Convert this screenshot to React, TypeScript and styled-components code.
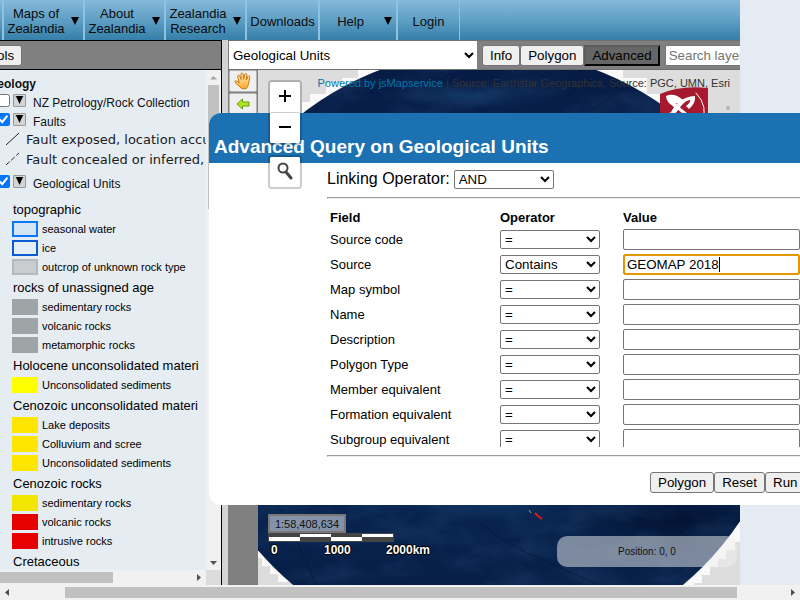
import React from "react";
import styled, { createGlobalStyle, css } from "styled-components";

const sans = '"Liberation Sans", Arial, sans-serif';

const GlobalStyle = createGlobalStyle`
  html, body { margin: 0; height: 100%; }
  body { background: #e4ebf3; font-family: ${sans}; color: #111; overflow: hidden; }
  *, *::before, *::after { box-sizing: border-box; }
  button, input, select { font-family: ${sans}; }
  svg { flex: none; }
`;

const Frame = styled.div`
  height: 100vh;
  display: flex;
  flex-direction: column;
`;

const Viewport = styled.div`
  position: relative;
  flex: 1;
  min-height: 0;
  overflow: hidden;
  display: flex;
`;

/* The document is scrolled 65px to the right. */
const Page = styled.div`
  flex: 1;
  min-width: 0;
  margin: 0 60px 0 -65px;
  display: flex;
  flex-direction: column;
`;

const Nav = styled.nav`
  flex: none;
  height: 40px;
  display: flex;
  overflow: hidden;
  background: linear-gradient(#85b9da, #5f9fc5 50%, #357fa9);
`;

const NavItem = styled.a<{ $width: number }>`
  flex: none;
  width: ${(p) => p.$width}px;
  display: flex;
  align-items: center;
  padding-top: 2px;
  border-right: 2px solid #8fc1e0;
  color: #0b0b0b;
  font-size: 13px;
  line-height: 15px;
  text-align: center;
  text-decoration: none;
  &:last-child { border-right-width: 1px; }
`;

const NavLabel = styled.span`
  flex: 1;
  padding: 0 3px;
`;

const NavArrow = styled.svg`
  flex: none;
  width: 8px;
  height: 8px;
  margin: 0 4px 0 3px;
`;

const Columns = styled.div`
  flex: 1;
  min-height: 0;
  display: flex;
`;

const SidePanel = styled.aside`
  flex: none;
  width: 287px;
  display: flex;
  flex-direction: column;
  border-right: 1px solid #000;
`;

const SideTools = styled.div`
  flex: none;
  height: 30px;
  display: flex;
  align-items: center;
  padding-left: 40px;
  border-top: 1px solid #000;
  border-bottom: 1px solid #000;
  background: #808080;
`;

const SideScroll = styled.div`
  flex: 1;
  min-height: 0;
  display: grid;
  grid-template-columns: minmax(0, 1fr) 15px;
  grid-template-rows: minmax(0, 1fr) 15px;
`;

const LayerTree = styled.div`
  overflow: hidden;
  padding: 5px 0 0 53px;
  background: #e5ecf2;
  white-space: nowrap;
`;

const Corner = styled.div`
  background: #dcdcdc;
`;

const GroupTitle = styled.h2`
  margin: 0;
  font-size: 12px;
  line-height: 18px;
`;

const LayerRow = styled.div`
  display: flex;
  align-items: center;
  height: 19px;
  padding-left: 9px;
  font-size: 12px;
`;

const LayerCheck = styled.input`
  width: 13px;
  height: 13px;
  margin: 0 3px 4px 0;
`;

const ExpandButton = styled.button`
  width: 13px;
  height: 13px;
  margin: 0 7px 4px 0;
  padding: 0;
  display: flex;
  align-items: center;
  justify-content: center;
  border: 1px solid #999;
  border-radius: 1px;
  background: #d4d4d4;
`;

const FaultList = styled.ul`
  list-style: none;
  margin: -2px 0 5px;
  padding: 0 0 0 18px;
`;

const FaultRow = styled.li`
  display: flex;
  align-items: center;
  gap: 6px;
  height: 20px;
  color: #1a1a1a;
  font: 13px "DejaVu Sans", sans-serif;
`;

const LegendGroup = styled.section`
  padding: 0 0 2px 25px;
`;

const Legend = styled.div`
  padding-top: 7px;
`;

const LegendTitle = styled.h3`
  margin: 0;
  color: #000;
  font-size: 13px;
  font-weight: 400;
  line-height: 19px;
`;

const LegendItem = styled.div`
  display: flex;
  align-items: center;
  gap: 4px;
  height: 19px;
  color: #000;
  font-size: 11px;
`;

const Swatch = styled.span<{ $fill: string; $line?: string }>`
  width: 26px;
  height: 16px;
  margin-left: -1px;
  background: ${(p) => p.$fill};
  border: 2px solid ${(p) => p.$line ?? p.$fill};
`;

const Bar = styled.div<{ $vertical?: boolean }>`
  flex: none;
  display: flex;
  align-items: stretch;
  flex-direction: ${(p) => (p.$vertical ? "column" : "row")};
  ${(p) => (p.$vertical ? "width: 15px;" : "height: 15px;")}
  background: #f1f1f1;
`;

const BarArrow = styled.svg`
  flex: none;
  width: 15px;
  height: 15px;
`;

const Thumb = styled.div<{ $size: string; $offset?: number; $vertical?: boolean }>`
  flex: none;
  background: #c1c1c1;
  ${(p) =>
    p.$vertical
      ? css`height: ${p.$size}; margin: ${p.$offset ?? 0}px 2px auto;`
      : css`width: ${p.$size}; margin: 2px auto 2px ${p.$offset ?? 0}px;`}
`;

const Splitter = styled.div`
  flex: none;
  width: 6px;
  background: #d3d3d3;
`;

const MapColumn = styled.main`
  flex: 1;
  min-width: 0;
  display: flex;
  flex-direction: column;
  background: #808080;
`;

const MapTools = styled.div`
  flex: none;
  height: 30px;
  display: flex;
  align-items: center;
  overflow: hidden;
  border-top: 1px solid #707070;
  border-bottom: 1px solid #707070;
  padding-left: 1px;
  > * { flex: none; }
`;

const LayerSelect = styled.select`
  width: 248px;
  height: 28px;
  margin-right: 5px;
  border: 0;
  border-radius: 0;
  background: #fff;
  color: #000;
`;

const Button = styled.button<{ $pressed?: boolean }>`
  height: 21px;
  padding: 0 7px;
  border: 1px solid #767676;
  border-radius: 3px;
  background: #efefef;
  color: #000;
  ${(p) =>
    p.$pressed &&
    css`
      padding: 0 6px;
      border: 2px outset #5c5c5c;
      border-radius: 0;
      background: #666;
    `}
`;

const TextInput = styled.input<{ $active?: boolean }>`
  display: block;
  width: 177px;
  height: 21px;
  padding: 1px 3px;
  border: 1px solid #767676;
  border-radius: 2px;
  background: #fff;
  color: #000;
  outline: none;
  ${(p) =>
    p.$active &&
    css`
      border-radius: 3px;
      outline: 2px solid #e59700;
      outline-offset: -2px;
      caret-color: transparent;
    `}
`;

const SearchInput = styled(TextInput)`
  margin-left: 5px;
`;

/* Steady text caret laid over the end of the active value. */
const ValueCell = styled.div<{ $active: boolean }>`
  position: relative;
  ${(p) =>
    p.$active &&
    css`
      &::after {
        content: "";
        position: absolute;
        left: 96px;
        top: 3px;
        width: 1px;
        height: 15px;
        background: #000;
      }
    `}
`;

const MapBody = styled.div`
  flex: 1;
  min-height: 0;
  display: flex;
`;

const ToolColumn = styled.div`
  flex: none;
  width: 30px;
  display: flex;
  flex-direction: column;
  gap: 1px;
  padding: 0 1px;
`;

const ToolButton = styled.button`
  height: 22px;
  padding: 0;
  display: flex;
  align-items: center;
  justify-content: center;
  border: 1px solid #b5b5b5;
  border-radius: 2px;
  background: #efefef;
`;

const MapArea = styled.div`
  position: relative;
  flex: 1;
  min-width: 0;
  overflow: hidden;
  background: #ddd;
`;

const Globe = styled.svg`
  position: absolute;
  left: 0;
  top: 0;
  width: 482px;
  height: 515px;
`;

const Controls = styled.div`
  position: absolute;
  z-index: 20;
  left: 10px;
  top: 10px;
  display: flex;
  flex-direction: column;
  gap: 10px;
`;

const ControlBox = styled.div`
  width: 34px;
  border: 2px solid rgba(0, 0, 0, 0.2);
  border-radius: 4px;
  background: #fff;
  background-clip: padding-box;
`;

const ControlButton = styled.button`
  display: flex;
  align-items: center;
  justify-content: center;
  width: 30px;
  height: 30px;
  padding: 0 0 3px;
  border: 0;
  border-radius: 2px;
  background: #fff;
  & + & { height: 31px; border-top: 1px solid #ccc; }
`;

const Attribution = styled.div`
  position: absolute;
  right: 10px;
  top: 7px;
  color: #333;
  font-size: 11px;
  line-height: 13px;
  white-space: nowrap;
  a { color: #0078a8; text-decoration: none; }
`;

const BrandMark = styled.svg`
  position: absolute;
  right: 32px;
  top: 17px;
  width: 48px;
  height: 48px;
`;

const CompassDot = styled.span`
  position: absolute;
  right: 10px;
  top: 36px;
  width: 4px;
  height: 4px;
  border-radius: 50%;
  background: #b3b3b3;
`;

const Scale = styled.div`
  position: absolute;
  left: 10px;
  bottom: 27px;
`;

const ScaleRatio = styled.div`
  width: 78px;
  height: 19px;
  border: 2px solid #777;
  background: rgba(255, 255, 255, 0.5);
  color: #111;
  font-size: 11px;
  line-height: 16px;
  text-align: center;
`;

const ScaleBar = styled.div`
  width: 126px;
  height: 9px;
  display: grid;
  grid-template-columns: repeat(4, 1fr);
  border: 1px solid #444;
`;

const ScaleSegment = styled.span<{ $whiteTop: boolean }>`
  background: ${(p) =>
    p.$whiteTop ? "linear-gradient(#fff 50%, #444 50%)" : "linear-gradient(#444 50%, #fff 50%)"};
`;

const ScaleLabels = styled.div`
  display: grid;
  grid-template-columns: 53px 62px auto;
  padding-left: 3px;
  color: #fff;
  font-size: 12px;
  font-weight: 700;
  line-height: 16px;
  text-shadow: 1px 0 #000, -1px 0 #000, 0 1px #000, 0 -1px #000;
`;

const Position = styled.div`
  position: absolute;
  right: 3px;
  bottom: 18px;
  width: 180px;
  height: 31px;
  border-radius: 10px;
  background: rgba(240, 240, 240, 0.5);
  color: #111;
  font-size: 10px;
  line-height: 31px;
  text-align: center;
`;

const Dialog = styled.section`
  position: absolute;
  z-index: 10;
  left: 209px;
  right: -100px;
  top: 113px;
  overflow: hidden;
  border-radius: 12px;
  background: #fff;
`;

const DialogTitle = styled.h1`
  margin: 0;
  height: 50px;
  padding: 23px 5px 0;
  background: #1c71b3;
  color: #fff;
  font-size: 19px;
  line-height: 22px;
`;

const DialogForm = styled.form`
  padding: 6px 0 12px 118px;
`;

const LinkRow = styled.div`
  display: flex;
  align-items: center;
  gap: 4px;
  height: 20px;
  color: #000;
  font-size: 16px;
`;

const Select = styled.select`
  display: block;
  width: 100px;
  height: 19px;
  border: 1px solid #767676;
  border-radius: 2px;
  background: #fff;
  color: #000;
`;

const Rule = styled.hr`
  margin: 8px 0;
`;

const FieldArea = styled.div`
  height: 240px;
  overflow: hidden;
`;

const FieldTable = styled.table`
  table-layout: fixed;
  width: 417px;
  border-spacing: 2px;
  color: #000;
  font-size: 13px;
  th { height: 17px; padding: 0 1px; text-align: left; line-height: 15px; }
  td { height: 23px; padding: 1px; }
`;

const Col = styled.col<{ $width?: number }>`
  ${(p) => p.$width && `width: ${p.$width}px;`}
`;

const Actions = styled.div`
  display: flex;
  padding: 7px 0 0 323px;
`;

const nav = [
  { label: "Home", width: 69, menu: false },
  { label: "Maps of Zealandia", width: 81, menu: true },
  { label: "About Zealandia", width: 81, menu: true },
  { label: "Zealandia Research", width: 81, menu: true },
  { label: "Downloads", width: 73, menu: false },
  { label: "Help", width: 78, menu: true },
  { label: "Login", width: 62, menu: false },
];

type Entry = { name: string; fill: string; line?: string };

const legend: { title: string; items: Entry[] }[] = [
  {
    title: "topographic",
    items: [
      { name: "seasonal water", fill: "#d3e5f3", line: "#0a78f5" },
      { name: "ice", fill: "#e5eef7", line: "#0b5bd3" },
      { name: "outcrop of unknown rock type", fill: "#c9cdd0", line: "#b4b9bc" },
    ],
  },
  {
    title: "rocks of unassigned age",
    items: [
      { name: "sedimentary rocks", fill: "#9fa4a7" },
      { name: "volcanic rocks", fill: "#9fa4a7" },
      { name: "metamorphic rocks", fill: "#9fa4a7" },
    ],
  },
  {
    title: "Holocene unconsolidated materi",
    items: [{ name: "Unconsolidated sediments", fill: "#ffff00" }],
  },
  {
    title: "Cenozoic unconsolidated materi",
    items: [
      { name: "Lake deposits", fill: "#ffe600" },
      { name: "Colluvium and scree", fill: "#ffe600" },
      { name: "Unconsolidated sediments", fill: "#ffe600" },
    ],
  },
  {
    title: "Cenozoic rocks",
    items: [
      { name: "sedimentary rocks", fill: "#f2e600" },
      { name: "volcanic rocks", fill: "#e60000" },
      { name: "intrusive rocks", fill: "#e60000" },
    ],
  },
  { title: "Cretaceous", items: [{ name: "", fill: "#7fbf6b" }] },
];

const fields = [
  "Source code",
  "Source",
  "Map symbol",
  "Name",
  "Description",
  "Polygon Type",
  "Member equivalent",
  "Formation equivalent",
  "Subgroup equivalent",
];

const arrows = {
  up: "M4 9.5h7L7.5 6z",
  down: "M4 6h7l-3.500 4z",
  left: "M9 4v7L5 7.500z",
  right: "M6 4v7l4-3.500z",
};

function Arrow({ dir, color = "#505050" }: { dir: keyof typeof arrows; color?: string }) {
  return (
    <BarArrow viewBox="0 0 15 15" aria-hidden>
      <path d={arrows[dir]} fill={color} />
    </BarArrow>
  );
}

function Layer({ name, checked }: { name: string; checked: boolean }) {
  const id = name.replace(/\W+/g, "-");
  return (
    <LayerRow>
      <LayerCheck type="checkbox" id={id} defaultChecked={checked} />
      <ExpandButton aria-label={`Expand ${name}`}>
        <svg width="9" height="9" viewBox="0 0 9 9">
          <path d="M0 0h2.500l2 6z" fill="#c98a4a" />
          <path d="M9 0H6.500l-2 6z" fill="#6aa0d8" />
          <path d="M1 0h7L4.500 8z" fill="#000" />
        </svg>
      </ExpandButton>
      <label htmlFor={id}>{name}</label>
    </LayerRow>
  );
}

function Hand() {
  return (
    <svg width="18" height="18" viewBox="0 0 18 18">
      <defs>
        <linearGradient id="hand" x1="0" y1="0" x2="0" y2="1">
          <stop offset="0" stopColor="#fff3c4" />
          <stop offset="1" stopColor="#f9a72b" />
        </linearGradient>
      </defs>
      <path
        d="M5.500 14.500 1.200 10.600C.3 9.600 1.500 8.300 2.700 9l2.500 1.600L3.700 4.500c-.3-1.500 1.500-2 2-.6L7.200 7.500 6.900 2.200c0-1.600 2-1.700 2.200-.2l.6 5.200 1-4.700c.4-1.500 2.300-1.100 2.100.4l-.5 5.200 1.600-3.500c.7-1.300 2.200-.7 1.900.7l-1.200 5.900c-.4 2.600-1.100 4-2.300 5.400H7.500z"
        fill="url(#hand)"
        stroke="#cf7a10"
        strokeWidth="1"
        strokeLinejoin="round"
      />
    </svg>
  );
}

function OceanGlobe() {
  return (
    <Globe viewBox="0 0 482 515" aria-hidden>
      <defs>
        <linearGradient id="sea" x1="0" y1="0" x2="0" y2="1">
          <stop offset="0" stopColor="#071c45" />
          <stop offset="0.5" stopColor="#0a2a5c" />
          <stop offset="0.88" stopColor="#08234d" />
          <stop offset="1" stopColor="#071f48" />
        </linearGradient>
        <radialGradient id="deep">
          <stop offset="0" stopColor="#03102f" stopOpacity="0.85" />
          <stop offset="1" stopColor="#03102f" stopOpacity="0" />
        </radialGradient>
        <radialGradient id="shelf">
          <stop offset="0" stopColor="#1b4f7d" stopOpacity="0.45" />
          <stop offset="1" stopColor="#1b4f7d" stopOpacity="0" />
        </radialGradient>
        <filter id="floor" x="0" y="0" width="1" height="1">
          <feTurbulence type="fractalNoise" baseFrequency="0.02 0.04" numOctaves="5" seed="8" />
          <feColorMatrix values="0 0 0 0 0.1  0 0 0 0 0.26  0 0 0 0 0.48  1.200 0 0 0 -0.450" />
        </filter>
        <clipPath id="disc">
          <circle cx="230" cy="283" r="303" />
        </clipPath>
      </defs>
      <path
        fill="#f8f9f8"
        d="M100 0v8H84v5H68v11H52v8h-8v12H20v30H0v414h4v8h8v8h8v8h16v11h390v-3h10v-7h8v-8h8v-8h8v-8h8v-9h9v-8h5V63h-80V24h-13V8h-24V0z"
      />
      <g clipPath="url(#disc)">
        <rect width="482" height="515" fill="url(#sea)" />
        <ellipse cx="420" cy="450" rx="120" ry="30" fill="url(#deep)" />
        <ellipse cx="240" cy="432" rx="70" ry="20" fill="url(#shelf)" />
        <ellipse cx="210" cy="25" rx="90" ry="14" fill="url(#shelf)" />
        <rect width="482" height="515" filter="url(#floor)" opacity="0.25" />
        <path
          d="M20 435q20 35 38 80M222 453q24 20 58 35t60 27M330 42l55-35M305 28l38-24"
          fill="none"
          stroke="#041433"
          strokeWidth="1"
          opacity="0.5"
        />
      </g>
      <path d="M271 440l2 3" stroke="#8ba7a5" strokeWidth="1" />
      <path d="M277 443l3 3 4 3" stroke="#e21616" strokeWidth="2" fill="none" />
    </Globe>
  );
}

export default function App() {
  return (
    <Frame>
      <GlobalStyle />
      <Viewport>
        <Page>
          <Nav>
            {nav.map((item) => (
              <NavItem key={item.label} href="#" $width={item.width}>
                <NavLabel>{item.label}</NavLabel>
                {item.menu && (
                  <NavArrow viewBox="0 0 8 8" aria-hidden>
                    <path d="M0 0h8L4 8z" fill="#000" />
                  </NavArrow>
                )}
              </NavItem>
            ))}
          </Nav>
          <Columns>
            <SidePanel>
              <SideTools>
                <Button>Tools</Button>
              </SideTools>
              <SideScroll>
                <LayerTree>
                  <GroupTitle>Geology</GroupTitle>
                  <Layer name="NZ Petrology/Rock Collection" checked={false} />
                  <Layer name="Faults" checked />
                  <FaultList>
                    <FaultRow>
                      <svg width="14" height="14" viewBox="0 0 14 14" aria-hidden>
                        <path d="M0 13 13 1" stroke="#222" />
                      </svg>
                      Fault exposed, location accurate
                    </FaultRow>
                    <FaultRow>
                      <svg width="14" height="14" viewBox="0 0 14 14" aria-hidden>
                        <path d="M0 13 13 1" stroke="#333" strokeDasharray="5 2" />
                      </svg>
                      Fault concealed or inferred, location accurate
                    </FaultRow>
                  </FaultList>
                  <Layer name="Geological Units" checked />
                  <Legend>
                    {legend.map((group) => (
                      <LegendGroup key={group.title}>
                        <LegendTitle>{group.title}</LegendTitle>
                        {group.items.map((item) => (
                          <LegendItem key={item.name}>
                            <Swatch $fill={item.fill} $line={item.line} />
                            {item.name}
                          </LegendItem>
                        ))}
                      </LegendGroup>
                    ))}
                  </Legend>
                </LayerTree>
                <Bar $vertical>
                  <Arrow dir="up" color="#a3a3a3" />
                  <Thumb $vertical $size="124px" />
                  <Arrow dir="down" />
                </Bar>
                <Bar>
                  <Arrow dir="left" />
                  <Thumb $size="163px" />
                  <Arrow dir="right" />
                </Bar>
                <Corner />
              </SideScroll>
            </SidePanel>
            <Splitter />
            <MapColumn>
              <MapTools>
                <LayerSelect aria-label="Query layer">
                  <option>Geological Units</option>
                </LayerSelect>
                <Button>Info</Button>
                <Button>Polygon</Button>
                <Button $pressed>Advanced</Button>
                <SearchInput placeholder="Search layers" aria-label="Search layers" />
              </MapTools>
              <MapBody>
                <ToolColumn>
                  <ToolButton aria-label="Pan">
                    <Hand />
                  </ToolButton>
                  <ToolButton aria-label="Previous view">
                    <svg width="14" height="12" viewBox="0 0 14 12">
                      <path
                        d="M1 6 6.500 1v3H13v4H6.500v3z"
                        fill="#b4e61e"
                        stroke="#63a312"
                        strokeLinejoin="round"
                      />
                    </svg>
                  </ToolButton>
                </ToolColumn>
                <MapArea>
                  <OceanGlobe />
                  <Attribution>
                    <a href="#">Powered by jsMapservice</a> | Source: Earthstar Geographics, Source:
                    PGC, UMN, Esri
                  </Attribution>
                  <BrandMark viewBox="0 0 48 48" aria-hidden>
                    <path d="M0 7Q20-2 48 1v47H0z" fill="#a6192e" />
                    <path
                      d="M6 9q8-4 17 4l-3 4q-4-3-6 3Q6 15 6 9zM35 9q1 7-6 13l-3-3q5-4 4-6-4 0-9 6l-9 12-3-1q7-20 26-21z"
                      fill="#fff"
                    />
                    <g fill="none" stroke="#fff" strokeLinecap="round">
                      <path d="M12 16l20 16q5 6 2 9t-10-2L10 27" strokeWidth="3" />
                      <path d="M36 6q13 13 6 32" strokeWidth="1" />
                    </g>
                  </BrandMark>
                  <CompassDot />
                  <Controls>
                    <ControlBox>
                      <ControlButton aria-label="Zoom in">
                        <svg width="12" height="12" viewBox="0 0 12 12">
                          <path d="M6 0v12M0 6h12" stroke="#000" strokeWidth="2" />
                        </svg>
                      </ControlButton>
                      <ControlButton aria-label="Zoom out">
                        <svg width="12" height="12" viewBox="0 0 12 12">
                          <path d="M0 6h12" stroke="#000" strokeWidth="2" />
                        </svg>
                      </ControlButton>
                    </ControlBox>
                    <ControlBox>
                      <ControlButton aria-label="Search map">
                        <svg width="16" height="18" viewBox="0 0 16 18">
                          <circle cx="6" cy="6" r="4.500" fill="#fff" stroke="#444" strokeWidth="2" />
                          <path d="m9 10 5 6" stroke="#444" strokeWidth="3" strokeLinecap="round" />
                        </svg>
                      </ControlButton>
                    </ControlBox>
                  </Controls>
                  <Scale>
                    <ScaleRatio>1:58,408,634</ScaleRatio>
                    <ScaleBar>
                      <ScaleSegment $whiteTop={false} />
                      <ScaleSegment $whiteTop />
                      <ScaleSegment $whiteTop={false} />
                      <ScaleSegment $whiteTop />
                    </ScaleBar>
                    <ScaleLabels>
                      <span>0</span>
                      <span>1000</span>
                      <span>2000km</span>
                    </ScaleLabels>
                  </Scale>
                  <Position>Position: 0, 0</Position>
                </MapArea>
              </MapBody>
            </MapColumn>
          </Columns>
        </Page>

        <Dialog role="dialog" aria-labelledby="query-title">
          <DialogTitle id="query-title">Advanced Query on Geological Units</DialogTitle>
          <DialogForm onSubmit={(e) => e.preventDefault()}>
            <LinkRow>
              <label htmlFor="linking">Linking Operator:</label>
              <Select id="linking">
                <option>AND</option>
                <option>OR</option>
              </Select>
            </LinkRow>
            <Rule />
            <FieldArea>
              <FieldTable>
                <colgroup>
                  <Col $width={168} />
                  <Col $width={121} />
                  <Col />
                </colgroup>
                <thead>
                  <tr>
                    <th>Field</th>
                    <th>Operator</th>
                    <th>Value</th>
                  </tr>
                </thead>
                <tbody>
                  {fields.map((field, i) => {
                    const active = field === "Source";
                    return (
                      <tr key={field}>
                        <td>
                          <label htmlFor={`value-${i}`}>{field}</label>
                        </td>
                        <td>
                          <Select
                            aria-label={`${field} operator`}
                            defaultValue={active ? "Contains" : "="}
                          >
                            <option>=</option>
                            <option>Contains</option>
                          </Select>
                        </td>
                        <td>
                          <ValueCell $active={active}>
                            <TextInput
                              id={`value-${i}`}
                              $active={active}
                              defaultValue={active ? "GEOMAP 2018" : ""}
                            />
                          </ValueCell>
                        </td>
                      </tr>
                    );
                  })}
                </tbody>
              </FieldTable>
            </FieldArea>
            <Rule />
            <Actions>
              <Button type="button">Polygon</Button>
              <Button type="reset">Reset</Button>
              <Button type="submit">Run</Button>
            </Actions>
          </DialogForm>
        </Dialog>
      </Viewport>
      <Bar>
        <Arrow dir="left" />
        <Thumb $size="84%" $offset={50} />
        <Arrow dir="right" />
      </Bar>
    </Frame>
  );
}
